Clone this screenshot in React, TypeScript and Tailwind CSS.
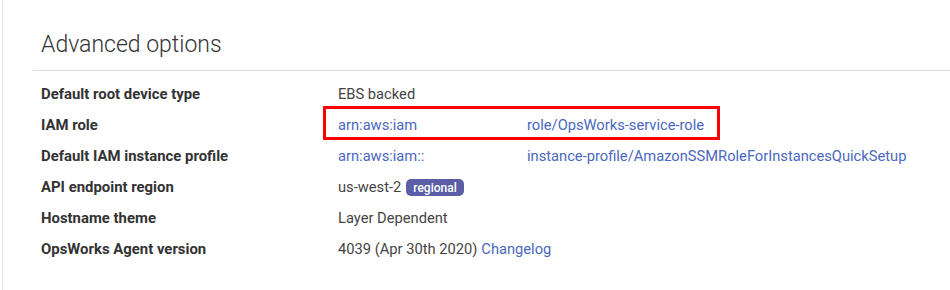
const rows = [
  { label: "Default root device type", kind: "text", value: "EBS backed" },
  { label: "IAM role", kind: "arn", first: "arn:aws:iam", second: "role/OpsWorks-service-role", boxed: true },
  { label: "Default IAM instance profile", kind: "arn", first: "arn:aws:iam::", second: "instance-profile/AmazonSSMRoleForInstancesQuickSetup" },
  { label: "API endpoint region", kind: "region", value: "us-west-2" },
  { label: "Hostname theme", kind: "text", value: "Layer Dependent" },
  { label: "OpsWorks Agent version", kind: "agent", value: "4039 (Apr 30th 2020)" },
];

const App = () => {
  return (
    <div className="h-[290px] w-[950px] bg-white font-['Roboto',sans-serif] overflow-hidden">
      <div className="ml-[2px] h-full border-l border-[#e3e3e3] pl-[30px]">
        {/* header */}
        <div className="border-b border-[#dedede] pt-[29px] pb-[9px] pl-2">
          <h2 className="text-[23px] leading-[32px] font-light text-[#333]">Advanced options</h2>
        </div>

        <div className="pt-2 pl-2">
          {rows.map((r) => (
            <div key={r.label} className="flex h-[31px] items-center leading-[31px]">
              <div className="w-[297px] text-[14.9px] font-bold text-[#333]">{r.label}</div>
              <div className="relative flex items-center text-[14.7px] text-[#444]">
                {r.kind == "text" && <span>{r.value}</span>}
                {r.kind == "arn" && (
                  <>
                    <span className="inline-block w-[189px] text-[#4a67c0]">{r.first}</span>
                    <span className="text-[#4a67c0]">{r.second}</span>
                  </>
                )}
                {r.kind == "region" && (
                  <>
                    <span>{r.value}</span>
                    <span className="ml-[5px] inline-flex h-[17px] items-center rounded-[5px] bg-[#5b5ea6] px-[7px] text-[12px] font-medium leading-none text-white">
                      regional
                    </span>
                  </>
                )}
                {r.kind == "agent" && (
                  <>
                    <span>{r.value}</span>
                    <a href="#" className="ml-1 text-[#4a67c0]">Changelog</a>
                  </>
                )}
                {r.boxed && (
                  <div className="absolute left-[-15px] top-[-4px] h-[34px] w-[397px] border-[3px] border-[#ff0000]" />
                )}
              </div>
            </div>
          ))}
        </div>
      </div>
    </div>
  );
};

export default App;
